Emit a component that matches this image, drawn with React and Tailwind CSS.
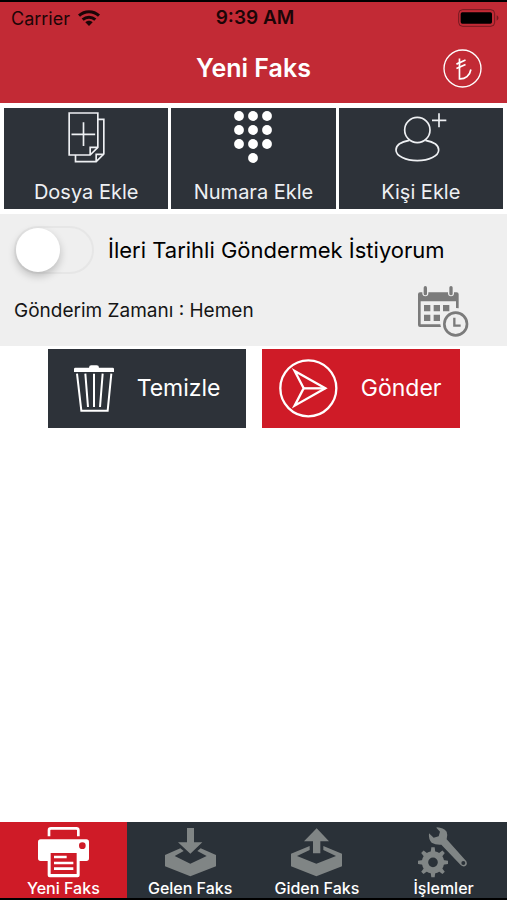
import { useState } from "react";

function WifiIcon() {
  return (
    <svg viewBox="0 0 66 48" className="w-[22px] h-4" fill="none" stroke="currentColor" strokeWidth="9" aria-hidden="true">
      <path d="M3 17C20 1 46 1 63 17" />
      <path d="M14 29C25 19 41 19 52 29" />
      <path d="M22 37L33 48L44 37C38 31 28 31 22 37Z" fill="currentColor" stroke="none" />
    </svg>
  );
}

function BatteryIcon() {
  return (
    <svg viewBox="0 0 123 54" className="w-[41px] h-[18px]" aria-hidden="true">
      <rect x="2" y="2" width="108" height="50" rx="12" fill="none" stroke="#000" strokeOpacity="0.4" strokeWidth="3" />
      <rect x="8" y="10" width="94" height="34" rx="5" fill="#000" />
      <path d="M116 19C123 22 123 32 116 35Z" fill="#000" fillOpacity="0.4" />
    </svg>
  );
}

function LiraIcon() {
  return (
    <svg viewBox="0 0 116 116" className="w-[39px] h-[39px]" fill="none" stroke="currentColor" strokeWidth="4" aria-hidden="true">
      <circle cx="58" cy="58" r="55" />
      <path d="M49 28V89C66 90 80 79 83 61" strokeWidth="5" />
      <path d="M40 45L67 33M40 58L67 46" strokeWidth="5" />
    </svg>
  );
}

function FileAddIcon() {
  return (
    <svg viewBox="0 0 110 153" className="w-[37px] h-[51px]" fill="none" stroke="currentColor" strokeWidth="5" aria-hidden="true">
      <path d="M3 3H89V106L66 129H3Z" />
      <path d="M66 129V106H89" />
      <path d="M89 22H107V126L84 149H22V129" />
      <path d="M84 149V127H107" />
      <path d="M46 31V102M10 67H81" />
    </svg>
  );
}

function KeypadIcon() {
  return (
    <svg viewBox="0 0 38 52" className="w-[38px] h-[52px]" fill="#fff" aria-hidden="true">
      {[5, 19, 33].map((y) =>
        [5, 19, 33].map((x) => <circle key={`${x}-${y}`} cx={x} cy={y} r="4.9" />)
      )}
      <circle cx="19" cy="47" r="4.9" />
    </svg>
  );
}

function PersonAddIcon() {
  return (
    <svg viewBox="0 0 156 147" className="w-[52px] h-[49px]" fill="none" stroke="currentColor" strokeWidth="5" aria-hidden="true">
      <circle cx="67" cy="51" r="38" />
      <path d="M43 82C15 87 3 99 3 111C3 129 32 143 67 143S131 129 131 111C131 99 119 87 91 82" />
      <path d="M132 1V43M111 22H154" />
    </svg>
  );
}

function ScheduleIcon() {
  return (
    <svg viewBox="0 0 153 153" className="w-[51px] h-[51px]" fill="currentColor" aria-hidden="true">
      <path d="M6 19H13V22A9 9 0 0 0 31 22V19H90V22A9 9 0 0 0 108 22V19H116Q122 19 122 25V67Q118 66 114 66V46H8V115H67Q67 119 69 123H6Q0 123 0 117V25Q0 19 6 19Z" />
      <rect x="17" y="0" width="10" height="28" rx="5" />
      <rect x="94" y="0" width="10" height="28" rx="5" />
      <path d="M18 57H37V76H18ZM47 57H66V76H47ZM75 57H94V76H75ZM18 86H37V105H18ZM47 86H66V105H47Z" />
      <circle cx="113" cy="114" r="34" fill="none" stroke="currentColor" strokeWidth="8" />
      <path d="M109 95V119H128" fill="none" stroke="currentColor" strokeWidth="7" />
    </svg>
  );
}

function TrashIcon() {
  return (
    <svg viewBox="0 0 120 141" className="w-10 h-[47px]" fill="none" stroke="currentColor" strokeWidth="6" aria-hidden="true">
      <path d="M45 8Q45 1 52 1H68Q75 1 75 8H116Q120 8 120 12V21H0V12Q0 8 4 8Z" fill="currentColor" stroke="none" />
      <path d="M9 26L22 137H101L112 26" />
      <path d="M34 26L42 126M60 26V126M86 26L78 126" />
    </svg>
  );
}

function SendIcon() {
  return (
    <svg viewBox="0 0 177 177" className="w-[59px] h-[59px]" fill="none" stroke="currentColor" strokeWidth="7" aria-hidden="true">
      <circle cx="88" cy="88" r="84" />
      <path d="M47 36L139 88L47 140L74 88Z" />
      <path d="M74 88H139" />
    </svg>
  );
}

function PrinterIcon() {
  return (
    <svg viewBox="0 0 153 153" className="w-[51px] h-[51px]" aria-hidden="true">
      <path d="M33 28V10Q33 4 39 4H115Q121 4 121 10V28" fill="none" stroke="#fff" strokeWidth="8" />
      <path d="M8 37H145Q153 37 153 45V94Q153 102 145 102H125V145Q125 151 119 151H35Q29 151 29 145V102H8Q0 102 0 94V45Q0 37 8 37Z" fill="#fff" />
      <circle cx="133" cy="56" r="10" fill="#cf1b27" />
      <path d="M38 78H116V141H38Z" fill="#cf1b27" />
      <path d="M48 90H86M48 108H106M48 125H106" stroke="#fff" strokeWidth="8" />
    </svg>
  );
}

function InboxIcon() {
  return (
    <svg viewBox="0 0 153 153" className="w-[51px] h-[51px]" fill="currentColor" aria-hidden="true">
      <path d="M66 3H87V46H112L76 80L39 46H66Z" />
      <path d="M0 84L46 64L56 72L29 87L76 110L125 87L97 72L107 64L153 84V118L76 148L0 118Z" />
    </svg>
  );
}

function OutboxIcon() {
  return (
    <svg viewBox="0 0 153 153" className="w-[51px] h-[51px]" fill="currentColor" aria-hidden="true">
      <path d="M77 4L114 43H88V79H66V43H39Z" />
      <path d="M0 80L56 57V69L18 87L76 110L135 87L97 69V57L153 80V118L76 148L0 118Z" />
    </svg>
  );
}

function ToolsIcon() {
  return (
    <svg viewBox="0 0 153 153" className="w-[51px] h-[51px]" fill="currentColor" aria-hidden="true">
      <path
        fillRule="evenodd"
        d="M57 1Q76 2 86 14Q90 24 86 37L145 103Q150 114 140 118Q133 119 128 114L70 53Q52 54 41 47Q31 37 33 19L47 32L62 28L66 14L55 2ZM136 102A6 6 0 1 0 136 114A6 6 0 1 0 136 102Z"
      />
      <circle cx="45" cy="106" r="24" fill="none" stroke="currentColor" strokeWidth="19" />
      {[0, 45, 90, 135, 180, 225, 270, 315].map((angle) => (
        <path key={angle} d="M38 76L40 61H50L52 76Z" transform={`rotate(${angle} 45 106)`} />
      ))}
    </svg>
  );
}

const addActions = [
  { label: "Dosya Ekle", icon: <FileAddIcon /> },
  { label: "Numara Ekle", icon: <KeypadIcon /> },
  { label: "Kişi Ekle", icon: <PersonAddIcon /> },
];

const tabs = [
  { id: "new", label: "Yeni Faks", icon: <PrinterIcon /> },
  { id: "inbox", label: "Gelen Faks", icon: <InboxIcon /> },
  { id: "outbox", label: "Giden Faks", icon: <OutboxIcon /> },
  { id: "settings", label: "İşlemler", icon: <ToolsIcon /> },
];

export default function App() {
  const [scheduled, setScheduled] = useState(false);

  return (
    <div lang="tr" className="flex flex-col min-h-screen bg-white font-['Inter',sans-serif] border-y-2 border-black">
      <header className="bg-[#c22a35]">
        {/* Status bar */}
        <div className="grid grid-cols-3 items-center h-8 pl-[11px] pr-2 text-[18px] text-[#1c0507]">
          <div className="flex items-center gap-2">
            <span>Carrier</span>
            <WifiIcon />
          </div>
          <span className="text-center text-[19px] font-semibold">9:39 AM</span>
          <div className="flex justify-end">
            <BatteryIcon />
          </div>
        </div>

        {/* Title bar */}
        <div className="grid grid-cols-[1fr_auto_1fr] items-center h-[69px] px-[25px] text-white">
          <h1 className="col-start-2 text-[25px] font-semibold">Yeni Faks</h1>
          <button type="button" aria-label="Bakiye" className="justify-self-end">
            <LiraIcon />
          </button>
        </div>
      </header>

      <main className="flex-1">
        <div className="grid grid-cols-3 gap-[3px] px-1 py-[5px]">
          {addActions.map((action) => (
            <button
              key={action.label}
              type="button"
              className="flex flex-col items-center justify-between h-[101px] pt-[3px] pb-1 bg-[#2d3239] text-[#eef0f3] text-[20px] leading-[26px]"
            >
              <span className="flex items-center h-[52px]">{action.icon}</span>
              {action.label}
            </button>
          ))}
        </div>

        {/* Scheduling */}
        <section className="h-[132px] pl-[14px] pr-[38px] pt-3 bg-[#efefef] text-[#151515]">
          <label className="flex items-center gap-[14px] text-[22px] text-black">
            <input
              type="checkbox"
              role="switch"
              checked={scheduled}
              onChange={(e) => setScheduled(e.target.checked)}
              className="appearance-none shrink-0 w-20 h-12 rounded-full border-2 border-[#e6e6e6] checked:bg-green-500 before:block before:w-11 before:h-11 before:rounded-full before:bg-white before:shadow-[0_4px_9px_rgba(0,0,0,0.22)] checked:before:ml-auto"
            />
            İleri Tarihli Göndermek İstiyorum
          </label>
          <div className="flex items-center justify-between mt-3">
            <p className="text-[19px]">Gönderim Zamanı : Hemen</p>
            <button type="button" aria-label="Tarih seç" className="text-[#7b7b7b]">
              <ScheduleIcon />
            </button>
          </div>
        </section>

        <div className="flex justify-center gap-4 pt-[3px] text-[23px] text-white">
          <button type="button" className="flex items-center justify-between w-[198px] h-[79px] pl-[26px] pr-[25px] bg-[#2d3239]">
            <TrashIcon />
            Temizle
          </button>
          <button type="button" className="flex items-center justify-between w-[198px] h-[79px] pl-[17px] pr-[18px] bg-[#cf1b27]">
            <SendIcon />
            Gönder
          </button>
        </div>
      </main>

      <nav className="grid grid-cols-4 bg-[#2a3138]">
        {tabs.map((tab) => (
          <a
            key={tab.id}
            href={`#${tab.id}`}
            aria-current={tab.id === "new" ? "page" : undefined}
            className="flex flex-col items-center h-[76px] pt-[5px] text-[#808585] aria-[current=page]:bg-[#cf1b27]"
          >
            {tab.icon}
            <span className="text-[16px] leading-[20px] font-medium text-white">{tab.label}</span>
          </a>
        ))}
      </nav>
    </div>
  );
}
